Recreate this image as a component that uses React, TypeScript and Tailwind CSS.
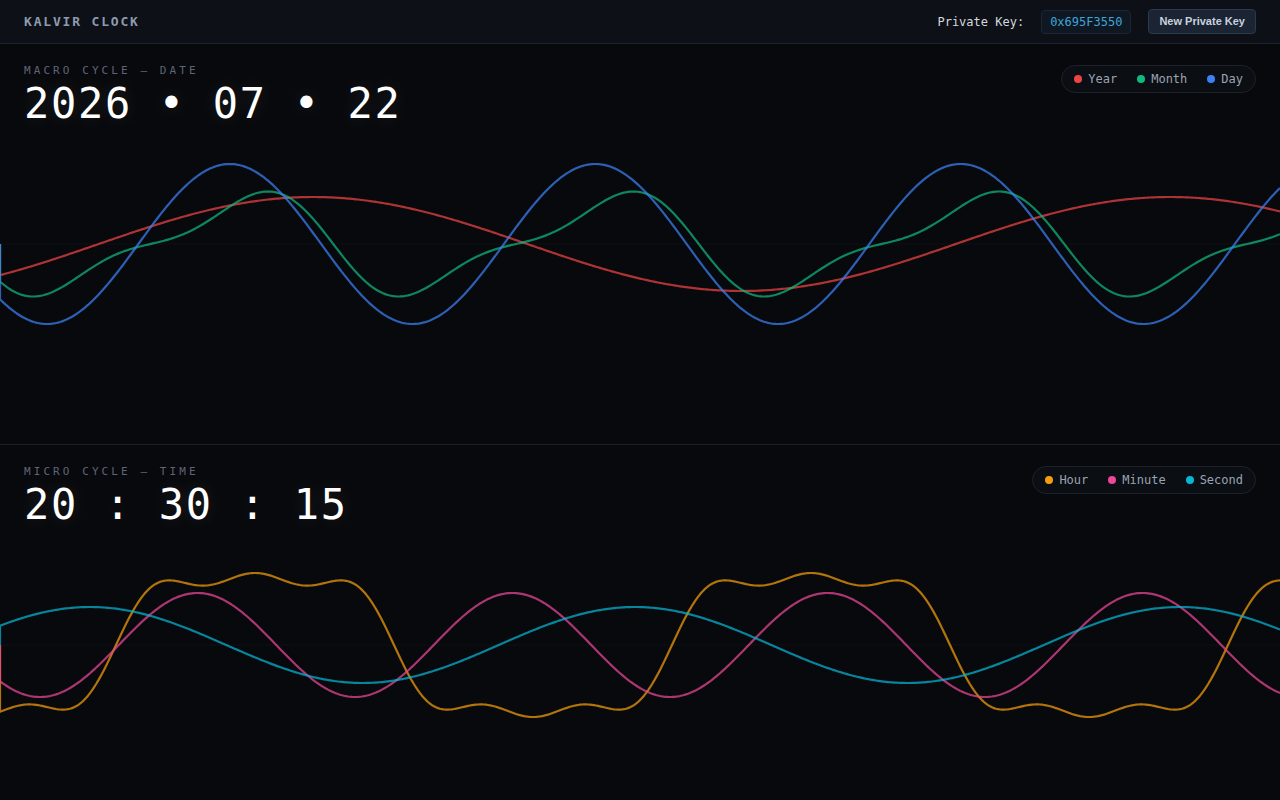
import { useMemo } from 'react'

const W = 1280
const H = 400
const MID = H / 2

type Wave = {
    name: string
    dot: string
    stroke: string
    fn: (x: number) => number
}

const TAU = Math.PI * 2

// Date waves: slow year swell, month sawtooth-ish, day sine
const macroWaves: Wave[] = [
    {
        name: 'Year',
        dot: 'bg-[#ef4444]',
        stroke: '#ef4444',
        fn: (x) => MID - 47 * Math.cos((TAU * (x - 313)) / 857),
    },
    {
        name: 'Month',
        dot: 'bg-[#10b981]',
        stroke: '#10b981',
        fn: (x) => {
            const t = (TAU * (x - 150.5)) / 365.5
            return MID - 44.7 * (Math.sin(t) - 0.35 * Math.sin(2 * t))
        },
    },
    {
        name: 'Day',
        dot: 'bg-[#3b82f6]',
        stroke: '#3b82f6',
        fn: (x) => MID + 80 * Math.cos((TAU * (x - 47)) / 365.5),
    },
]

// Time waves: hour is a soft square, minute/second plain sines
const microWaves: Wave[] = [
    {
        name: 'Hour',
        dot: 'bg-[#f59e0b]',
        stroke: '#f59e0b',
        fn: (x) => {
            const t = (TAU * (x - 116)) / 556
            const f = Math.sin(t) + 0.2325 * Math.sin(3 * t) + 0.135 * Math.sin(5 * t)
            return MID - 79.8 * f
        },
    },
    {
        name: 'Minute',
        dot: 'bg-[#ec4899]',
        stroke: '#ec4899',
        fn: (x) => MID + 52 * Math.cos((TAU * (x - 40)) / 315),
    },
    {
        name: 'Second',
        dot: 'bg-[#06b6d4]',
        stroke: '#06b6d4',
        fn: (x) => MID - 38 * Math.cos((TAU * (x - 90)) / 545),
    },
]

function buildPath(fn: (x: number) => number) {
    let d = `M0 ${MID}`
    for (let x = 0; x <= W; x += 2) {
        d += ` L${x} ${fn(x).toFixed(2)}`
    }
    return d
}

function WaveChart({ waves }: { waves: Wave[] }) {
    const paths = useMemo(() => waves.map((w) => buildPath(w.fn)), [waves])
    return (
        <svg
            className="absolute inset-0 h-full w-full"
            viewBox={`0 0 ${W} ${H}`}
            preserveAspectRatio="none"
        >
            <line x1={0} y1={MID} x2={W} y2={MID} stroke="#ffffff" strokeOpacity={0.03} />
            {paths.map((d, i) => (
                <path
                    key={waves[i].name}
                    d={d}
                    fill="none"
                    stroke={waves[i].stroke}
                    strokeOpacity={0.72}
                    strokeWidth={2.2}
                    strokeLinejoin="round"
                />
            ))}
        </svg>
    )
}

function Legend({ waves }: { waves: Wave[] }) {
    return (
        <div className="mt-px flex h-7 items-center gap-5 rounded-full border border-[#1c212b] bg-[#0b0e13] px-3">
            {waves.map((w) => (
                <div key={w.name} className="flex items-center gap-1.5">
                    <span className={`h-2 w-2 rounded-full ${w.dot}`} />
                    <span className="text-xs leading-none text-[#9aa3b2]">{w.name}</span>
                </div>
            ))}
        </div>
    )
}

function CyclePanel({
    label,
    value,
    waves,
    bordered,
}: {
    label: string
    value: string
    waves: Wave[]
    bordered?: boolean
}) {
    return (
        <section
            className={`relative ${bordered ? 'h-[401px] border-b border-[#1a1f28]' : 'h-[400px]'}`}
        >
            <WaveChart waves={waves} />
            <div className="relative flex items-start justify-between px-6 pt-5">
                <div>
                    <div className="mt-px text-[11px] leading-none tracking-[0.28em] text-[#5d6577]">
                        {label}
                    </div>
                    <div className="mt-[7px] text-[42px] leading-none tracking-[0.04em] text-white [text-shadow:0_0_18px_rgba(255,255,255,0.12)]">
                        {value}
                    </div>
                </div>
                <Legend waves={waves} />
            </div>
        </section>
    )
}

export default function App() {
    return (
        <div className="min-h-screen overflow-hidden bg-[#08090d] font-['DejaVu_Sans_Mono','Liberation_Mono',monospace]">
            {/* Top bar */}
            <header className="flex h-11 items-center justify-between border-b border-[#1c2230] bg-[#0d1016] px-6">
                <div className="text-[13px] font-bold tracking-[0.14em] text-[#8e9ab0]">
                    KALVIR CLOCK
                </div>
                <div className="flex items-center gap-4">
                    <span className="text-xs text-[#d4d8de]">Private Key:</span>
                    <span className="ml-px rounded border border-[#1b2533] bg-[#0f1722] px-2 py-[3px] text-xs text-[#3ea6d8]">
                        0x695F3550
                    </span>
                    <button className="ml-px rounded border border-[#2c3a4f] bg-[#1a2433] px-2.5 py-[3px] font-['Liberation_Sans',Arial,sans-serif] text-[11px] font-bold text-[#c9d2de]">
                        New Private Key
                    </button>
                </div>
            </header>

            <CyclePanel
                label="MACRO CYCLE — DATE"
                value="2026 • 07 • 22"
                waves={macroWaves}
                bordered
            />
            <CyclePanel label="MICRO CYCLE — TIME" value="20 : 30 : 15" waves={microWaves} />
        </div>
    )
}
